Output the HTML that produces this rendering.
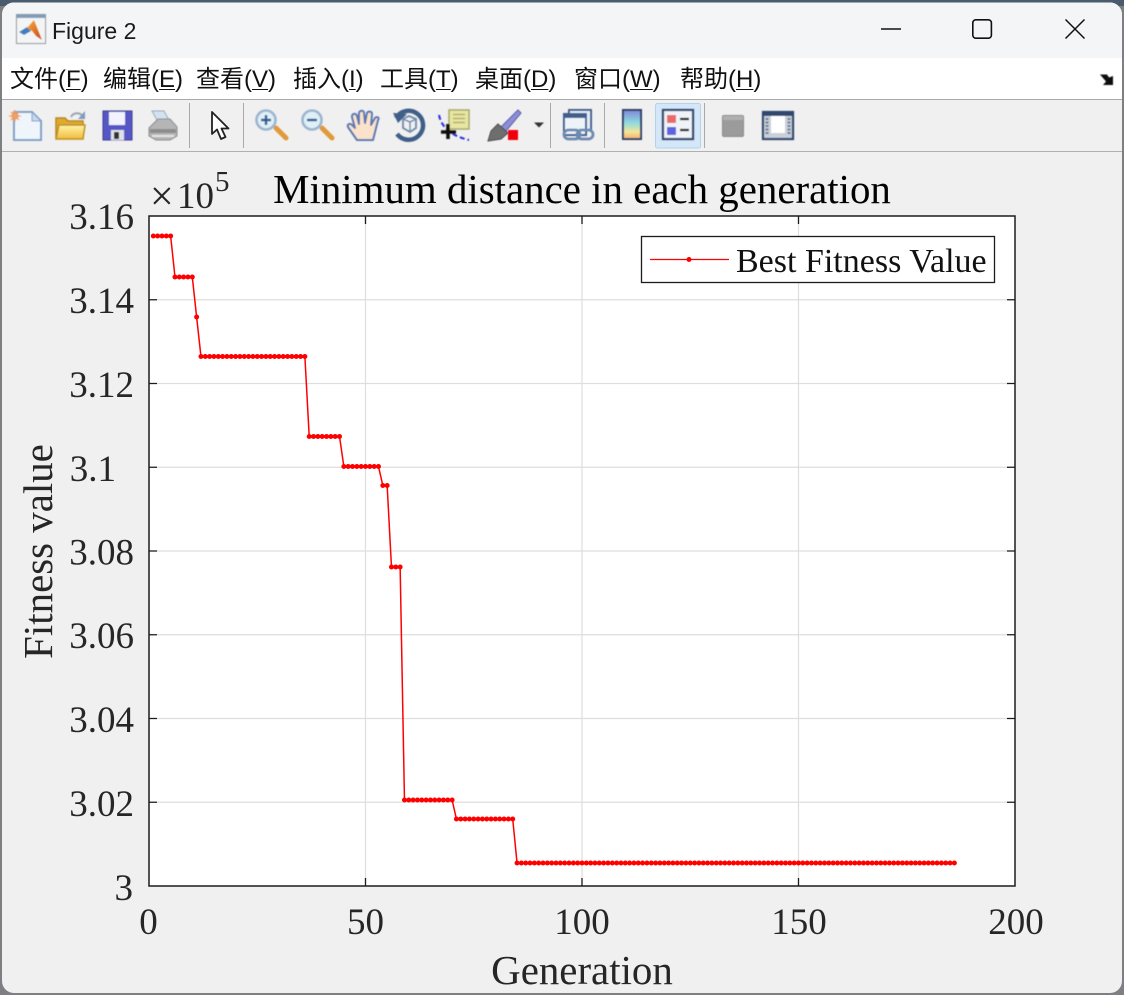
<!DOCTYPE html>
<html lang="zh"><head><meta charset="utf-8"><title>Figure 2</title>
<style>
html,body{margin:0;padding:0;background:#7d7f82}
body{position:relative;width:1124px;height:995px;overflow:hidden}
svg{position:absolute;left:0;top:0}
.m{position:absolute;top:64px;height:32px;font:24px/32px "Liberation Sans","Noto Sans CJK SC",sans-serif;color:#111;white-space:nowrap}
.m u{text-underline-offset:2px;text-decoration-thickness:1.3px}
</style></head>
<body>
<svg width="1124" height="995" viewBox="0 0 1124 995" xmlns="http://www.w3.org/2000/svg">
<defs>
<filter id="b" x="-5%" y="-5%" width="110%" height="110%"><feGaussianBlur stdDeviation="0.6"/></filter>
<linearGradient id="cb" x1="0" y1="0" x2="0" y2="1"><stop offset="0" stop-color="#7f86d6"/><stop offset=".45" stop-color="#8fdce0"/><stop offset=".75" stop-color="#f4e59a"/><stop offset="1" stop-color="#f2b070"/></linearGradient>
<linearGradient id="fold" x1="0" y1="0" x2="0" y2="1"><stop offset="0" stop-color="#fff3a8"/><stop offset="1" stop-color="#f0bd3c"/></linearGradient>
<linearGradient id="ml" x1="0" y1="0" x2="1" y2="1"><stop offset="0" stop-color="#f8b030"/><stop offset="1" stop-color="#c8401a"/></linearGradient>
</defs>
<!-- backdrop edges -->
<rect width="1124" height="995" fill="#7d7f82"/>
<rect width="1124" height="6" fill="#4a5b6d"/>
<!-- window -->
<rect x="2" y="2.5" width="1120" height="990.5" rx="12" fill="#f0f0f0"/>
<path d="M2 58V14.5a12 12 0 0 1 12-12H1110a12 12 0 0 1 12 12V58Z" fill="#f3f5f7"/>
<rect x="2" y="58" width="1120" height="41" fill="#fff"/>
<rect x="2" y="99" width="1120" height="1" fill="#a9a9a9"/>
<rect x="2" y="151" width="1120" height="1" fill="#b0b0b0"/>
<!-- title bar -->
<text x="52" y="39" font-family="'Liberation Sans',sans-serif" font-size="23" fill="#1a1a1a">Figure 2</text>
<g filter="url(#b)">
<rect x="16.5" y="14.5" width="29" height="29" fill="#f4f4f4" stroke="#8d9499"/>
<rect x="16.5" y="14.5" width="29" height="3.5" fill="#7f9db8"/>
<path d="M19 32 27 27 L31 31 L24 35Z" fill="#3d7fc0"/>
<path d="M27 28 34 20 42 40 36 36 32 31Z" fill="url(#ml)"/>
</g>
<path d="M881 29H901" stroke="#111" stroke-width="1.6"/>
<rect x="972.8" y="19.8" width="18.6" height="18.4" rx="3" fill="none" stroke="#111" stroke-width="1.6"/>
<path d="M1065.5 19.5 1084.5 38.5M1084.5 19.5 1065.5 38.5" stroke="#111" stroke-width="1.5"/>
<!-- menu corner arrow -->
<path d="M1100 74.5h7l2 3 4-1.500v9h-10l3-3.500-6-7Z" fill="#111" filter="url(#b)"/>

<!-- toolbar separators -->
<g fill="#a9a9a9"><rect x="189" y="103" width="1" height="45"/><rect x="243" y="103" width="1" height="45"/><rect x="550" y="103" width="1" height="45"/><rect x="604" y="103" width="1" height="45"/><rect x="704" y="103" width="1" height="45"/></g>
<rect x="655.500" y="103.500" width="45" height="44.500" rx="2" fill="#d3e7f8" stroke="#aed4f0"/>

<g filter="url(#b)">
<!-- new -->
<path d="M14 112H32L41 121V140H14Z" fill="#eef6fc" stroke="#7f9fc8" stroke-width="2"/>
<path d="M32 112V121H41Z" fill="#c8d8ec" stroke="#7f9fc8"/>
<circle cx="15" cy="116" r="3.500" fill="#f08a3c"/><path d="M15 110V122M9 116H21M11 112 19 120M19 112 11 120" stroke="#f2a060" stroke-width="1.300"/>
<!-- open -->
<path d="M56 138V118H65L68 121H83V138Z" fill="#e0aa30" stroke="#b88a1e" stroke-width="1.500"/>
<path d="M56 139 59 125H85L83 139Z" fill="url(#fold)" stroke="#c09020" stroke-width="1.500"/>
<path d="M71 117C73 113 78 112 82 115" fill="none" stroke="#9aa6b2" stroke-width="2"/><path d="M85 111V119H78Z" fill="#7f9cbc"/>
<!-- save -->
<rect x="103" y="111" width="29" height="29" fill="#5459c4" stroke="#3a3e90"/>
<rect x="109" y="112" width="16" height="13" fill="#f2f3ff"/>
<rect x="111" y="130" width="13" height="10" fill="#dfe0e8"/><rect x="114" y="132" width="5" height="7" fill="#333"/>
<!-- print -->
<path d="M152 111H164L170 122H158Z" fill="#d3e2f0" stroke="#9aa8b5"/>
<path d="M149 128 158 119H170L177 127V136L170 140H156L149 136Z" fill="#b5b5b5" stroke="#8b8b8b"/>
<path d="M150 129H176V133H150Z" fill="#8d8d8d"/><path d="M152 136H174" stroke="#e5e5e5" stroke-width="2"/>
</g>
<!-- arrow -->
<path d="M212 112V134L217 129.500 221 139 225.500 137 221.500 128.500H228.500Z" fill="#fff" stroke="#222" stroke-width="1.800" stroke-linejoin="round"/>

<g filter="url(#b)">
<!-- zoom in -->
<path d="M276 128 286 138" stroke="#e09a3a" stroke-width="5" stroke-linecap="round"/>
<circle cx="266" cy="120" r="9.500" fill="#dff0f6" stroke="#9db5cf" stroke-width="2.600"/>
<path d="M261 120H271M266 115V125" stroke="#2e5a92" stroke-width="2.400"/>
<!-- zoom out -->
<path d="M322 128 332 138" stroke="#e09a3a" stroke-width="5" stroke-linecap="round"/>
<circle cx="312" cy="120" r="9.500" fill="#dff0f6" stroke="#9db5cf" stroke-width="2.600"/>
<path d="M307 120H317" stroke="#2e5a92" stroke-width="2.400"/>
<!-- hand -->
<path d="M357 140 348 127C347 124 350 123 352 125L355 128 352 117C352 113 356 113 357 116L359 124 359 113C360 110 364 110 364 113L365 123 367 113C368 111 372 111 372 114L371 125 375 118C377 116 380 118 378 120L375 132 373 140Z" fill="#fbe3cb" stroke="#5a78b4" stroke-width="2" stroke-linejoin="round"/>
<!-- rotate -->
<path d="M396 118A14.500 14.500 0 1 1 397 134" fill="none" stroke="#3f5f88" stroke-width="4.500"/>
<path d="M393 113 407 114 398 123Z" fill="#3f5f88"/>
<path d="M403 119 409 116 416 119V128L410 132 403 128Z" fill="none" stroke="#6f8aa8" stroke-width="1.800"/><path d="M403 119 410 122 416 119M410 122V132" fill="none" stroke="#6f8aa8" stroke-width="1.300"/>
<!-- data cursor -->
<path d="M439 115C441 125 448 135 469 140" fill="none" stroke="#2a2ae0" stroke-width="2" stroke-dasharray="5 3"/>
<rect x="449" y="110" width="20" height="19" fill="#e9e6a2" stroke="#a6a86a" stroke-width="1.500"/>
<path d="M453 114.500H465M453 118.500H465M453 122.500H465" stroke="#b0b070" stroke-width="1.500"/>
<path d="M448 124V139M441 132H456" stroke="#111" stroke-width="3.600"/>
<!-- brush -->
<path d="M501 127 518 110 521 113 506 131Z" fill="#8b8ed8" stroke="#5a5ca0"/>
<path d="M498 124 508 133 501 139 488 141 491 131Z" fill="#6e6e6e" stroke="#4a4a4a"/>
<rect x="508" y="130" width="10" height="10" fill="#f0000c"/>
<path d="M534 122.500H544L539 127.500Z" fill="#333"/>
<!-- link -->
<rect x="569" y="110" width="22" height="20" fill="#e4ecf4" stroke="#3f5f8f" stroke-width="2"/>
<rect x="564" y="114" width="22" height="21" fill="#eef3f8" stroke="#3f5f8f" stroke-width="2"/>
<path d="M564 114H586V118H564Z" fill="#3f5f8f"/>
<rect x="564" y="130" width="16" height="9" rx="4.500" fill="none" stroke="#6b8ab0" stroke-width="2.800"/>
<rect x="577" y="130" width="16" height="9" rx="4.500" fill="none" stroke="#6b8ab0" stroke-width="2.800"/>
<!-- colorbar -->
<rect x="623" y="110" width="18" height="29" fill="url(#cb)" stroke="#2f3f68" stroke-width="2"/>
<!-- legend -->
<rect x="663" y="110" width="30" height="29" fill="#f0f4f8" stroke="#32466e" stroke-width="2.200"/>
<rect x="667" y="115" width="9" height="8" fill="#ea6a6a"/><rect x="667" y="127" width="9" height="8" fill="#5f63e0"/>
<path d="M680 119H689M680 130H689" stroke="#111" stroke-width="2.200"/>
<!-- gray square -->
<rect x="722.500" y="115.500" width="21" height="21" rx="1.500" fill="#9b9b9b" stroke="#8a8a8a"/>
<rect x="723" y="116" width="20" height="4" fill="#b0b0b0"/>
<!-- plot tools -->
<rect x="763" y="112" width="30" height="27" fill="#c9d0d8" stroke="#32466e" stroke-width="2.200"/>
<rect x="763" y="112" width="30" height="4" fill="#32466e"/>
<path d="M767 118V134M789 118V134" stroke="#6a7a96" stroke-width="3" stroke-dasharray="2 1.500"/>
<rect x="771" y="116" width="14" height="17" fill="#fff"/>
</g>

<!-- axes -->
<rect x="149" y="216" width="866" height="670" fill="#fff"/>
<g stroke="#dedede" stroke-width="1.200" fill="none">
<path d="M149 299.750H1015M149 383.500H1015M149 467.250H1015M149 551H1015M149 634.750H1015M149 718.500H1015M149 802.250H1015"/>
<path d="M365.500 216V886M582 216V886M798.500 216V886"/>
</g>
<g stroke="#1c1c1c" stroke-width="1.300" fill="none">
<path d="M149 299.750h8M149 383.500h8M149 467.250h8M149 551h8M149 634.750h8M149 718.500h8M149 802.250h8"/>
<path d="M1015 299.750h-8M1015 383.500h-8M1015 467.250h-8M1015 551h-8M1015 634.750h-8M1015 718.500h-8M1015 802.250h-8"/>
<path d="M365.500 886v-8M582 886v-8M798.500 886v-8M365.500 216v8M582 216v8M798.500 216v8"/>
<rect x="149" y="216" width="866" height="670" stroke-width="1.500"/>
</g>
<!-- data -->
<path d="M153.330 236H170.650L174.980 277H192.300L196.630 317 200.960 356.500H304.880L309.210 436.500H339.520L343.850 466.500H378.490L382.820 485.500H387.150L391.480 567H400.140L404.470 800H452.100L456.430 819H512.720L517.050 863H954.380" fill="none" stroke="#f00" stroke-width="1.500"/>
<path d="M153.330 236H170.700M174.980 277H192.350M196.630 317h.02M200.960 356.500H304.930M309.210 436.500H339.570M343.850 466.500H378.540M382.820 485.500H387.200M391.480 567H400.190M404.470 800H452.150M456.430 819H512.770M517.050 863H954.430" fill="none" stroke="#f00" stroke-width="5" stroke-linecap="round" stroke-dasharray="0 4.330"/>
<!-- legend -->
<rect x="641.500" y="236.500" width="353" height="46" fill="#fff" stroke="#1c1c1c" stroke-width="1.300"/>
<path d="M650 259.500H729" stroke="#f00" stroke-width="1.300"/><circle cx="689" cy="259.500" r="2.500" fill="#f00"/>
<text x="736" y="272" font-family="'Liberation Serif',serif" font-size="34" fill="#111">Best Fitness Value</text>
<!-- labels -->
<g font-family="'Liberation Serif',serif" fill="#262626" font-size="37">
<g text-anchor="end">
<text x="134" y="229">3.16</text><text x="134" y="313">3.14</text><text x="134" y="397">3.12</text><text x="116" y="481">3.1</text><text x="134" y="564.500">3.08</text><text x="134" y="648">3.06</text><text x="134" y="732">3.04</text><text x="134" y="816">3.02</text><text x="133" y="900">3</text>
</g>
<g text-anchor="middle">
<text x="148.500" y="934">0</text><text x="365.500" y="934">50</text><text x="582" y="934">100</text><text x="799" y="934">150</text><text x="1016" y="934">200</text>
</g>
<text x="150" y="210" font-size="42">×</text><text x="177" y="208">10</text><text x="215" y="191" font-size="29">5</text>
</g>
<g font-family="'Liberation Serif',serif" font-size="40.900" text-anchor="middle">
<text x="582" y="203" fill="#000">Minimum distance in each generation</text>
<text x="582" y="984" fill="#262626">Generation</text>
<text transform="translate(52 551.500) rotate(-90)" fill="#262626">Fitness value</text>
</g>
</svg>
<div class="m" style="left:10px">文件(<u>F</u>)</div>
<div class="m" style="left:103px">编辑(<u>E</u>)</div>
<div class="m" style="left:196px">查看(<u>V</u>)</div>
<div class="m" style="left:293px">插入(<u>I</u>)</div>
<div class="m" style="left:380px">工具(<u>T</u>)</div>
<div class="m" style="left:475px">桌面(<u>D</u>)</div>
<div class="m" style="left:574px">窗口(<u>W</u>)</div>
<div class="m" style="left:680px">帮助(<u>H</u>)</div>
</body></html>
